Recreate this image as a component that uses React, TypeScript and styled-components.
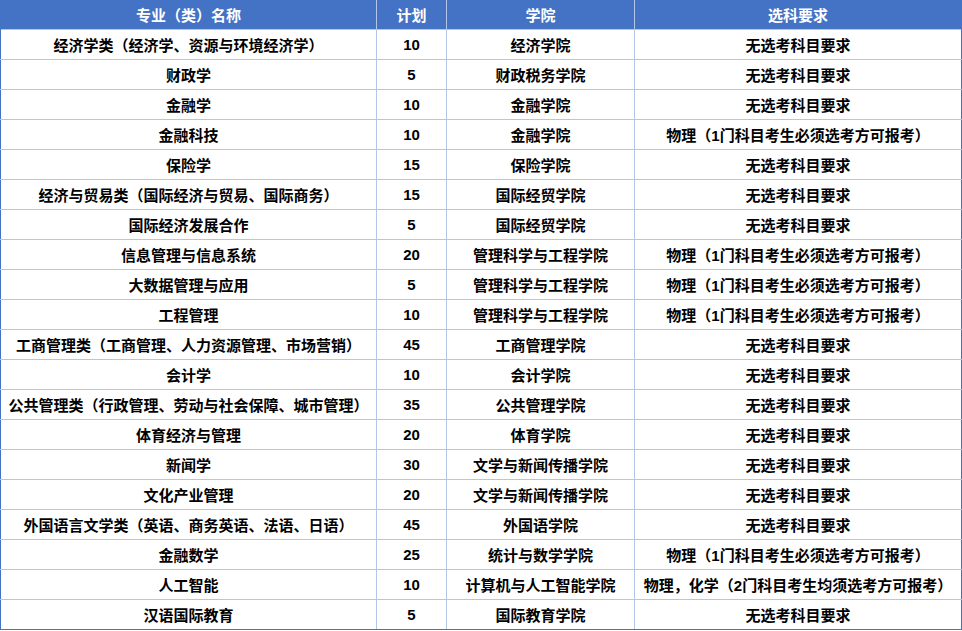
import React from "react";
import styled, { createGlobalStyle } from "styled-components";

const Global = createGlobalStyle`
  html, body { margin: 0; padding: 0; background: #ffffff; }
  body { font-family: "Liberation Sans", "Noto Sans CJK SC", sans-serif; }
`;

const Table = styled.table`
  border-collapse: collapse;
  table-layout: fixed;
  width: 961px;
  border: 1px solid #4472c4;
  border-top: none;
  font-family: "Liberation Sans", "Noto Sans CJK SC", sans-serif;
  font-weight: 700;
  font-size: 15px;
`;

const Col = styled.col<{ $w: number }>`
  width: ${(p) => p.$w}px;
`;

const HeadCell = styled.th`
  background: #4472c4;
  color: #ffffff;
  height: 29px;
  padding: 0;
  text-align: center;
  font-weight: 700;
  border-left: 1px solid #b4c6e7;
  border-right: 1px solid #b4c6e7;
  &:first-child { border-left: 1px solid #4472c4; }
  &:last-child { border-right: 1px solid #4472c4; }
`;

const Cell = styled.td`
  height: 29px;
  padding: 0;
  text-align: center;
  color: #000000;
  white-space: nowrap;
  border: 1px solid #b4c6e7;
  &:first-child { border-left: 1px solid #4472c4; }
  &:last-child { border-right: 1px solid #4472c4; }
`;

const Row = styled.tr`
  &:last-child td { border-bottom: 1px solid #4472c4; }
`;

const NO_REQ = "无选考科目要求";
const PHY = "物理（1门科目考生必须选考方可报考）";

const columns: { title: string; width: number }[] = [
  { title: "专业（类）名称", width: 376 },
  { title: "计划", width: 70 },
  { title: "学院", width: 188 },
  { title: "选科要求", width: 327 },
];

const rows: [string, string, string, string][] = [
  ["经济学类（经济学、资源与环境经济学）", "10", "经济学院", NO_REQ],
  ["财政学", "5", "财政税务学院", NO_REQ],
  ["金融学", "10", "金融学院", NO_REQ],
  ["金融科技", "10", "金融学院", PHY],
  ["保险学", "15", "保险学院", NO_REQ],
  ["经济与贸易类（国际经济与贸易、国际商务）", "15", "国际经贸学院", NO_REQ],
  ["国际经济发展合作", "5", "国际经贸学院", NO_REQ],
  ["信息管理与信息系统", "20", "管理科学与工程学院", PHY],
  ["大数据管理与应用", "5", "管理科学与工程学院", PHY],
  ["工程管理", "10", "管理科学与工程学院", PHY],
  ["工商管理类（工商管理、人力资源管理、市场营销）", "45", "工商管理学院", NO_REQ],
  ["会计学", "10", "会计学院", NO_REQ],
  ["公共管理类（行政管理、劳动与社会保障、城市管理）", "35", "公共管理学院", NO_REQ],
  ["体育经济与管理", "20", "体育学院", NO_REQ],
  ["新闻学", "30", "文学与新闻传播学院", NO_REQ],
  ["文化产业管理", "20", "文学与新闻传播学院", NO_REQ],
  ["外国语言文学类（英语、商务英语、法语、日语）", "45", "外国语学院", NO_REQ],
  ["金融数学", "25", "统计与数学学院", PHY],
  ["人工智能", "10", "计算机与人工智能学院", "物理，化学（2门科目考生均须选考方可报考）"],
  ["汉语国际教育", "5", "国际教育学院", NO_REQ],
];

export default function App() {
  return (
    <>
      <Global />
      <Table>
        <colgroup>
          {columns.map((c) => (
            <Col key={c.title} $w={c.width} />
          ))}
        </colgroup>
        <thead>
          <tr>
            {columns.map((c) => (
              <HeadCell key={c.title}>{c.title}</HeadCell>
            ))}
          </tr>
        </thead>
        <tbody>
          {rows.map((r, i) => (
            <Row key={i}>
              {r.map((c, j) => (
                <Cell key={j}>{c}</Cell>
              ))}
            </Row>
          ))}
        </tbody>
      </Table>
    </>
  );
}
